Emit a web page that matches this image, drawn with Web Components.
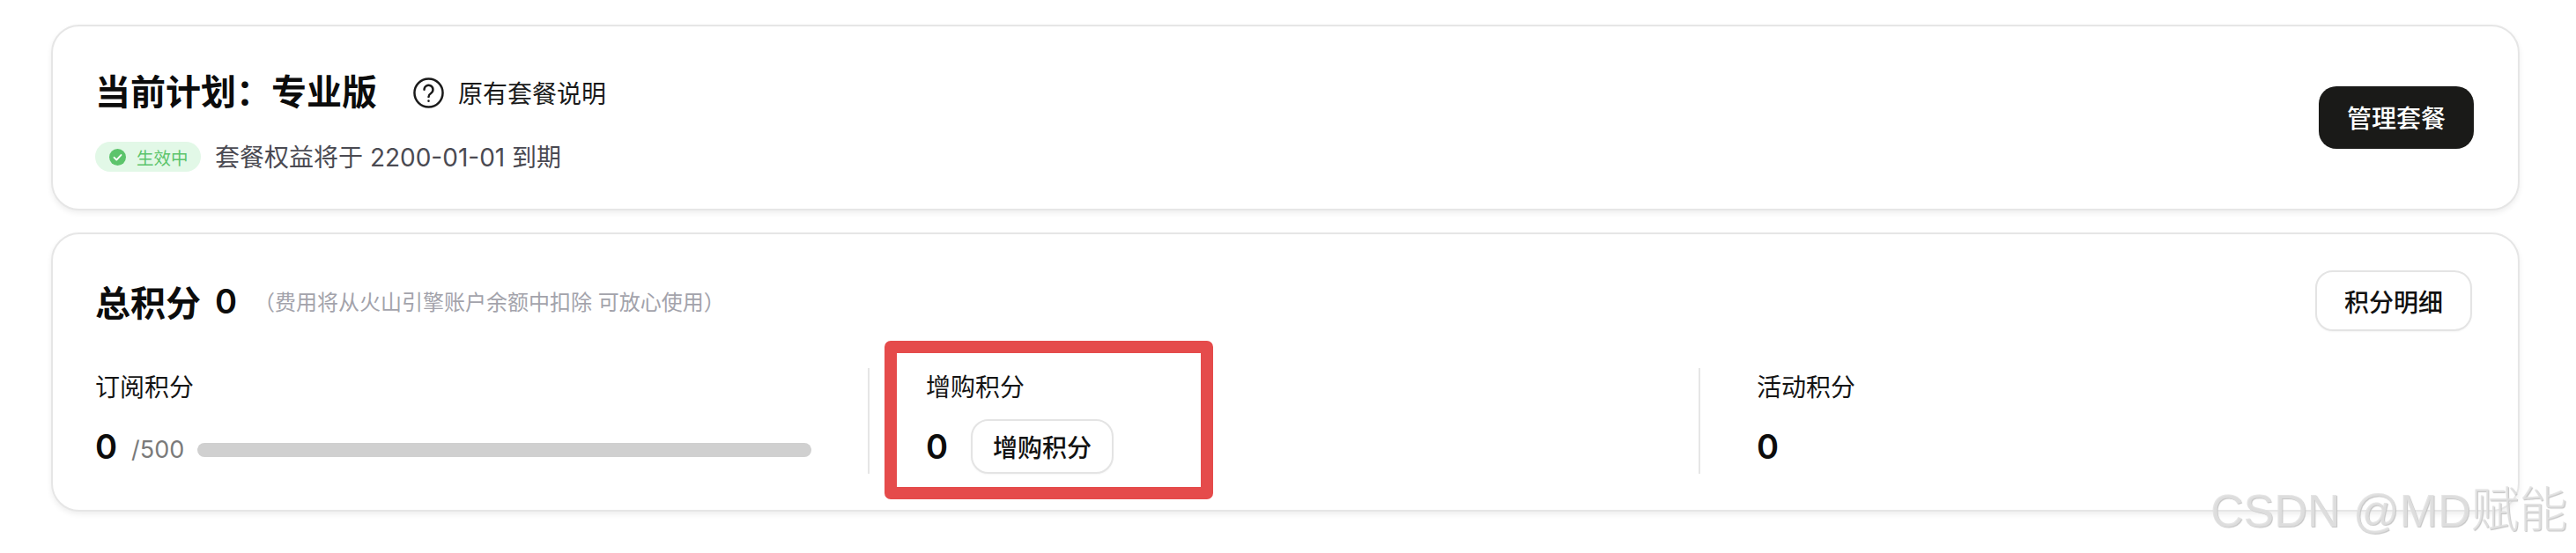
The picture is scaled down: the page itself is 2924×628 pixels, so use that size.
<!DOCTYPE html>
<html lang="zh">
<head>
<meta charset="utf-8">
<title>plan</title>
<style>
  html, body { margin: 0; background: #fff; }
  body {
    width: 2924px;
    height: 628px;
    overflow: hidden;
    font-family: Inter, "Noto Sans CJK SC", sans-serif;
    color: #111;
  }
</style>
</head>
<body>
<plan-page>
  <plan-card>
    <plan-summary></plan-summary>
  </plan-card>
  <points-card></points-card>
</plan-page>
<water-mark></water-mark>

<script>
class PlanPage extends HTMLElement {
  constructor() {
    super();
    this.attachShadow({ mode: "open" });
  }
  connectedCallback() {
    this.shadowRoot.innerHTML = `
      <style>
        :host {
          display: flex;
          flex-direction: column;
          gap: 25px;
          padding: 28px 64px 0 58px;
        }
      </style>
      <slot></slot>
    `;
  }
}

class PlanCard extends HTMLElement {
  constructor() {
    super();
    this.attachShadow({ mode: "open" });
  }
  connectedCallback() {
    this.shadowRoot.innerHTML = `
      <style>
        :host {
          display: block;
          box-sizing: border-box;
          background: #fff;
          border: 2px solid #e6e6e6;
          border-radius: 32px;
          box-shadow: 0 3px 6px rgba(0, 0, 0, 0.07);
          padding: var(--card-padding, 49px 50px 42px 48px);
        }
      </style>
      <slot></slot>
    `;
  }
}

class PlanButton extends HTMLElement {
  constructor() {
    super();
    this.attachShadow({ mode: "open" });
  }
  connectedCallback() {
    this.shadowRoot.innerHTML = `
      <style>
        :host {
          display: inline-flex;
          flex: none;
          align-items: center;
          justify-content: center;
          box-sizing: border-box;
          width: 162px;
          height: 62px;
          border: 2px solid #e4e4e4;
          border-radius: 20px;
          background: #fff;
          color: #111;
          font-size: 28px;
          font-weight: 500;
          box-shadow: 0 1px 2px rgba(0, 0, 0, 0.04);
        }
        :host([dark]) {
          background: #1a1a18;
          color: #fff;
          border: 0;
          box-shadow: none;
        }
      </style>
      <slot></slot>
    `;
  }
}

class PlanSummary extends HTMLElement {
  constructor() {
    super();
    this.attachShadow({ mode: "open" });
  }
  connectedCallback() {
    this.shadowRoot.innerHTML = `
      <style>
        :host {
          display: flex;
          align-items: center;
          justify-content: space-between;
        }
        .title-row { display: flex; align-items: center; height: 52px; }
        h2 { margin: 0; font-size: 40px; line-height: 52px; font-weight: 600; color: #0c0c0c; }
        .help { display: flex; align-items: center; margin-left: 41px; font-size: 28px; color: #1a1a1a; }
        .help svg { width: 35px; height: 35px; margin-right: 16px; }
        .sub { display: flex; align-items: center; margin-top: 30px; height: 34px; }
        .expire { margin: -2px 0 0 16px; font-size: 28px; color: #4a4a52; }
        plan-button { width: 176px; height: 71px; margin-bottom: 8px; }
      </style>
      <div>
        <div class="title-row">
          <h2>当前计划：专业版</h2>
          <span class="help">
            <svg viewBox="0 0 24 24" fill="none" stroke="#1a1a1a" stroke-width="1.7" stroke-linecap="round" stroke-linejoin="round">
              <circle cx="12" cy="12" r="11"/>
              <path d="M8.6 9.4a3.4 3.4 0 1 1 5.2 2.9c-1.1.7-1.8 1.3-1.8 2.7"/>
              <path d="M12 18.2v.1"/>
            </svg>
            原有套餐说明
          </span>
        </div>
        <div class="sub">
          <status-pill>生效中</status-pill>
          <span class="expire">套餐权益将于 2200-01-01 到期</span>
        </div>
      </div>
      <plan-button dark>管理套餐</plan-button>
    `;
  }
}

class StatusPill extends HTMLElement {
  constructor() {
    super();
    this.attachShadow({ mode: "open" });
  }
  connectedCallback() {
    this.shadowRoot.innerHTML = `
      <style>
        :host {
          display: inline-flex;
          align-items: center;
          box-sizing: border-box;
          width: 120px;
          height: 34px;
          padding-left: 16px;
          border-radius: 17px;
          background: #e2f8e7;
          color: #5cc46b;
          font-size: 19.5px;
        }
        svg { width: 19px; height: 19px; margin-right: 12px; }
      </style>
      <svg viewBox="0 0 20 20">
        <circle cx="10" cy="10" r="10" fill="#5cc46b"/>
        <path d="M5.8 10.4l2.9 2.8 5.4-5.8" fill="none" stroke="#fff" stroke-width="2" stroke-linecap="round" stroke-linejoin="round"/>
      </svg>
      <slot></slot>
    `;
  }
}

class PointsColumn extends HTMLElement {
  constructor() {
    super();
    this.attachShadow({ mode: "open" });
  }
  connectedCallback() {
    this.shadowRoot.innerHTML = `
      <style>
        :host { display: block; flex: 1 1 0; min-width: 0; height: 120px; }
        .label { height: 40px; line-height: 44px; font-size: 28px; color: #141414; }
        .row { display: flex; align-items: center; height: 62px; margin-top: 18px; }
        .value { font-size: 38px; font-weight: 600; color: #0c0c0c; }
      </style>
      <div class="label">${this.getAttribute("label")}</div>
      <div class="row">
        <span class="value">0</span>
        <slot></slot>
      </div>
    `;
  }
}

class PointsCard extends HTMLElement {
  constructor() {
    super();
    this.attachShadow({ mode: "open" });
  }
  connectedCallback() {
    this.shadowRoot.innerHTML = `
      <style>
        :host { display: block; --card-padding: 41px 51px 41px 48px; position: relative; }
        .head { display: flex; align-items: center; justify-content: space-between; height: 69px; }
        .total { display: flex; align-items: center; color: #0c0c0c; }
        h2 { margin: 0; font-size: 40px; font-weight: 600; }
        .num { margin-left: 16px; font-size: 38px; font-weight: 600; }
        .note { margin-left: 19px; font-size: 24px; color: #a3a3ab; }
        .head plan-button { width: 178px; height: 69px; margin-right: 1px; }
        .cols { display: flex; margin-top: 42px; }
        .rule { flex: none; width: 2px; margin: 0 64px; background: #e6e6e6; }
        .limit { margin-left: 16px; font-size: 27px; font-weight: 400; color: #7a7a7a; margin-top: 6px; }
        .bar { flex: 1; height: 16px; margin: 7px 0 0 15px; border-radius: 8px; background: #d0d0d0; }
        .col-two plan-button { margin-left: 26px; }
        .mark {
          position: absolute;
          left: 946px;
          top: 123px;
          box-sizing: border-box;
          width: 373px;
          height: 180px;
          border: 14px solid #e54b4b;
          border-radius: 7px;
        }
      </style>
      <plan-card>
        <div class="head">
          <div class="total">
            <h2>总积分</h2>
            <span class="num">0</span>
            <span class="note">（费用将从火山引擎账户余额中扣除 可放心使用）</span>
          </div>
          <plan-button>积分明细</plan-button>
        </div>
        <div class="cols">
          <points-column label="订阅积分">
            <span class="limit">/500</span>
            <div class="bar"></div>
          </points-column>
          <div class="rule"></div>
          <points-column class="col-two" label="增购积分">
            <plan-button>增购积分</plan-button>
          </points-column>
          <div class="rule"></div>
          <points-column label="活动积分"></points-column>
        </div>
      </plan-card>
      <div class="mark"></div>
    `;
  }
}

class WaterMark extends HTMLElement {
  constructor() {
    super();
    this.attachShadow({ mode: "open" });
  }
  connectedCallback() {
    this.shadowRoot.innerHTML = `
      <style>
        :host {
          display: block;
          position: absolute;
          left: 2509px;
          top: 548px;
          font-family: "Liberation Sans", "Noto Sans CJK SC", sans-serif;
          font-size: 52px;
          line-height: 64px;
          white-space: nowrap;
          color: rgba(226, 226, 226, 0.85);
          text-shadow: 1px 1px 1px #c4c4c4;
        }
        span { font-size: 55px; font-weight: 300; line-height: 0; }
      </style>
      CSDN @MD<span>赋能</span>
    `;
  }
}

customElements.define("plan-page", PlanPage);
customElements.define("plan-card", PlanCard);
customElements.define("plan-button", PlanButton);
customElements.define("status-pill", StatusPill);
customElements.define("plan-summary", PlanSummary);
customElements.define("points-column", PointsColumn);
customElements.define("points-card", PointsCard);
customElements.define("water-mark", WaterMark);
</script>
</body>
</html>
